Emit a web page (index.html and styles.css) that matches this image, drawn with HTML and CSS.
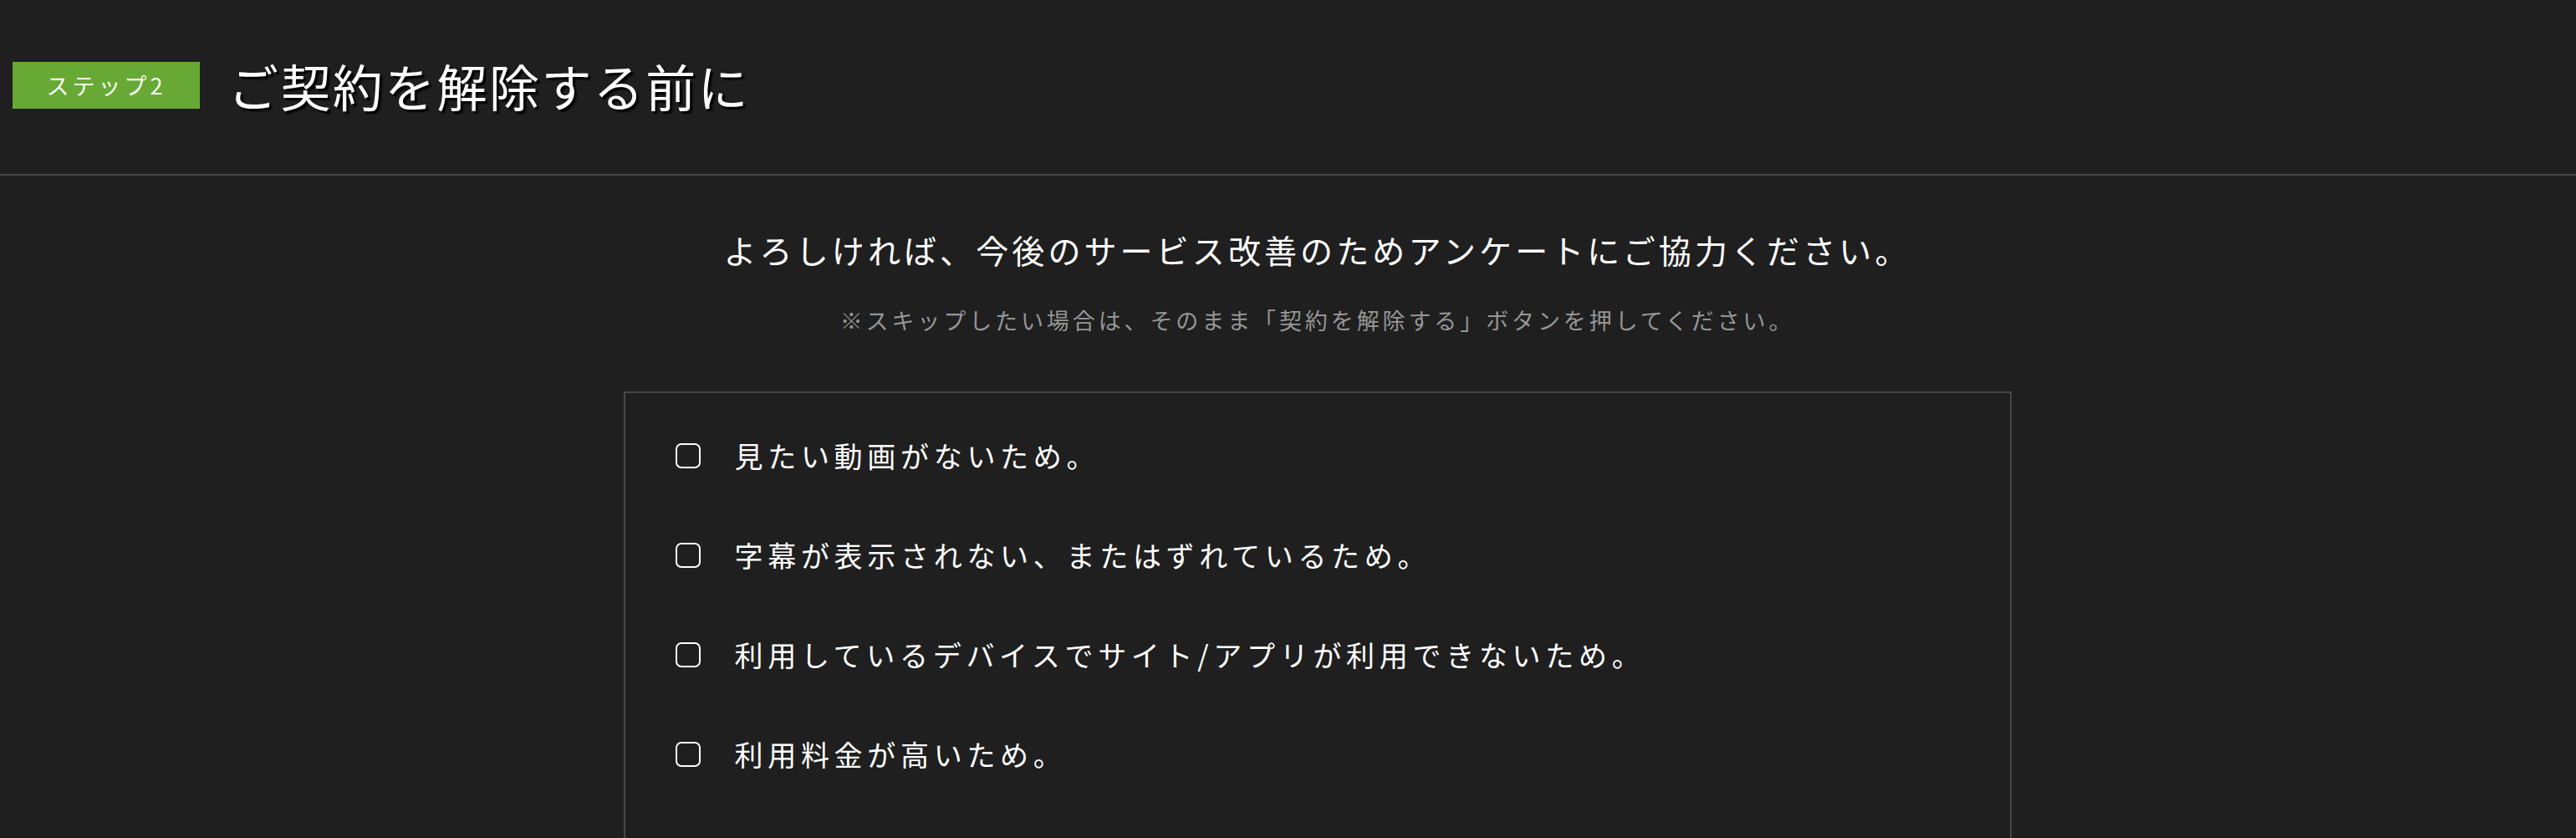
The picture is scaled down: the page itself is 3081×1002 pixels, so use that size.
FILE: index.html
```html
<!DOCTYPE html>
<html lang="ja">
  <head>
    <meta charset="UTF-8" />
    <meta name="viewport" content="width=device-width, initial-scale=1.0" />
    <title>ご契約を解除する前に</title>
    <link rel="stylesheet" href="styles.css">
  </head>
  <body>
    <header class="step-header">
      <span class="step-badge">ステップ2</span>
      <h1 class="step-title">ご契約を解除する前に</h1>
    </header>
    <main class="survey">
      <p class="survey-lead">よろしければ、今後のサービス改善のためアンケートにご協力ください。</p>
      <p class="survey-note">※スキップしたい場合は、そのまま「契約を解除する」ボタンを押してください。</p>
      <div class="survey-box">
        <label class="survey-item">
          <input type="checkbox" class="check" />
          <span>見たい動画がないため。</span>
        </label>
        <label class="survey-item">
          <input type="checkbox" class="check" />
          <span>字幕が表示されない、またはずれているため。</span>
        </label>
        <label class="survey-item">
          <input type="checkbox" class="check" />
          <span>利用しているデバイスでサイト/アプリが利用できないため。</span>
        </label>
        <label class="survey-item">
          <input type="checkbox" class="check" />
          <span>利用料金が高いため。</span>
        </label>
      </div>
    </main>
  </body>
</html>
```

FILE: styles.css
```css
body {
  font-family: "Noto Sans CJK JP", "Noto Sans", sans-serif;
  background: #1f1f1f;
  color: white;
  margin: 0;
  padding: 0;
  overflow: hidden;
}
.step-header {
  display: flex;
  align-items: center;
  gap: 34px;
  padding: 74px 0 78px 15px;
  border-bottom: 2px solid #464646;
}
.step-badge {
  width: 224px;
  height: 56px;
  line-height: 56px;
  text-align: center;
  background-color: #67a934;
  font-size: 27px;
  letter-spacing: 4px;
}
.step-title {
  margin: 0;
  font-size: 60px;
  font-weight: normal;
  line-height: 56px;
  letter-spacing: 2.4px;
  text-shadow: 3px 3px 2px #000;
}
.survey {
  padding: 68px 0 0 70px;
  text-align: center;
}
.survey-lead {
  margin: 0;
  font-size: 39px;
  line-height: 40px;
  letter-spacing: 4.1px;
}
.survey-note {
  margin: 50px 0 0;
  font-size: 27px;
  line-height: 30px;
  letter-spacing: 3.9px;
  color: #969696;
}
.survey-box {
  box-sizing: border-box;
  width: 1660px;
  min-height: 600px;
  margin: 70px auto 0;
  padding: 60px 30px 60px 60px;
  border: 2px solid #474747;
  display: flex;
  flex-direction: column;
  gap: 89px;
  text-align: left;
}
.survey-item {
  display: flex;
  align-items: center;
  gap: 41px;
  font-size: 34px;
  line-height: 30px;
  letter-spacing: 5.7px;
}
.check {
  appearance: none;
  margin: 0;
  width: 30px;
  height: 30px;
  border: 2px solid white;
  border-radius: 7px;
  flex-shrink: 0;
}
```
